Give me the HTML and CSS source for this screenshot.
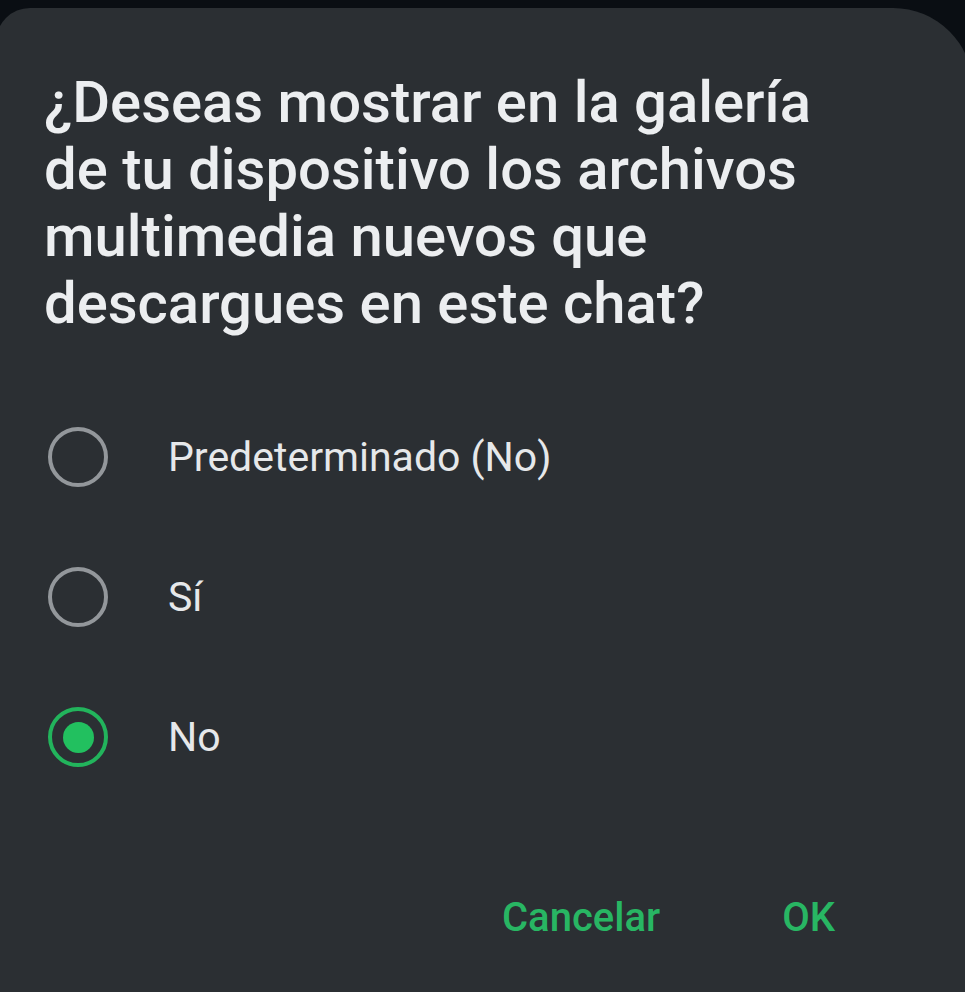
FILE: index.html
```html
<!DOCTYPE html>
<html lang="es">
<head>
    <meta charset="UTF-8">
    <meta name="viewport" content="width=device-width, initial-scale=1.0">
    <title>Archivos multimedia</title>
    <link rel="stylesheet" href="styles.css">
</head>
<body>

<div class="dialog">
    <h2 class="dialog-title">¿Deseas mostrar en la galería de tu dispositivo los archivos multimedia nuevos que descargues en este chat?</h2>

    <div class="options">
        <label class="option">
            <span class="radio"></span>
            <span class="option-text">Predeterminado (No)</span>
        </label>
        <label class="option">
            <span class="radio"></span>
            <span class="option-text">Sí</span>
        </label>
        <label class="option">
            <span class="radio checked"></span>
            <span class="option-text">No</span>
        </label>
    </div>

    <div class="actions">
        <button class="btn" type="button">Cancelar</button>
        <button class="btn" type="button">OK</button>
    </div>
</div>

</body>
</html>
```

FILE: styles.css
```css
html, body {
    height: 100%;
}
body {
    background-color: #0a0e13;
    font-family: Roboto, "Liberation Sans", Arial, sans-serif;
    margin: 0;
    overflow: hidden;
}
.dialog {
    background-color: #2b2f33;
    margin: 8px -8px 0 -4px;
    height: 1000px;
    border-radius: 34px 80px 0 0;
    padding: 61px 60px 0 48px;
    box-sizing: border-box;
}
.dialog-title {
    color: #eceef0;
    font-size: 58px;
    font-weight: 500;
    line-height: 67px;
    margin: 0;
    max-width: 812px;
}
.options {
    margin-top: 90px;
    display: flex;
    flex-direction: column;
    gap: 80px;
}
.option {
    display: flex;
    align-items: center;
    height: 60px;
}
.radio {
    width: 52px;
    height: 52px;
    border: 4px solid #93979b;
    border-radius: 50%;
    margin-left: 4px;
    margin-right: 60px;
    flex-shrink: 0;
    display: flex;
    align-items: center;
    justify-content: center;
}
.radio.checked {
    border-color: #22b45c;
}
.radio.checked::after {
    content: "";
    width: 31px;
    height: 31px;
    border-radius: 50%;
    background-color: #22c05f;
}
.option-text {
    color: #e6e8ea;
    font-size: 41px;
}
.actions {
    margin-top: 127px;
    display: flex;
    justify-content: flex-end;
    gap: 122px;
    padding-right: 78px;
}
.btn {
    background: none;
    border: none;
    padding: 0;
    color: #28b663;
    font-family: inherit;
    font-size: 40px;
    font-weight: 500;
    line-height: 47px;
}
```
